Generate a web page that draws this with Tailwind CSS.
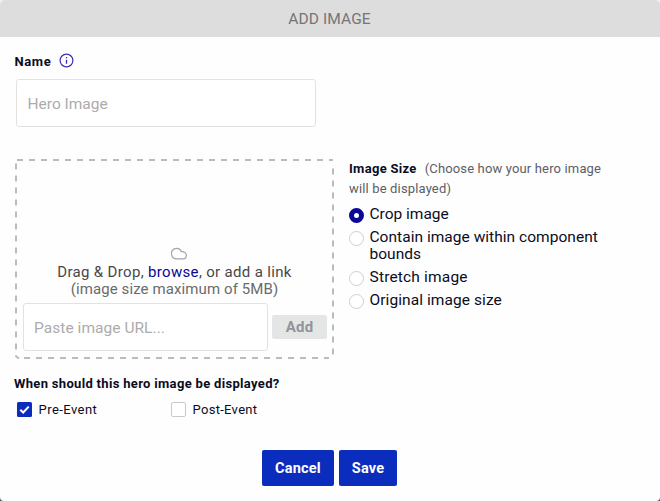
<!DOCTYPE html>
<html lang="en">
<head>
<meta charset="utf-8">
<title>Add Image</title>
<script src="https://cdn.jsdelivr.net/npm/@tailwindcss/browser@4"></script>
</head>
<body class="bg-linear-to-b from-[#f0f0f0] from-50% to-[#555555] to-50% font-[Roboto,'Liberation_Sans',sans-serif] text-[#0b0c1e]">
<main class="flex h-[501px] w-[660px] flex-col overflow-hidden rounded-t-[5px] rounded-b-[4px] bg-[#fefefe]">
  <header class="flex h-[37px] shrink-0 items-center justify-center bg-[#dddddd] pt-[2px] text-[15.5px] text-[#757575]"><span class="mr-px tracking-[0.1px]">ADD IMAGE</span></header>

  <section class="h-[122px] shrink-0 pl-[14px] pt-[14px]">
    <div class="flex h-5 items-center">
      <label for="name" class="w-[45px] pl-[0.5px] pt-[2px] text-[13px] font-bold tracking-[0.6px]">Name</label>
      <svg class="-mt-px h-[15px] w-[15px]" viewBox="0 0 15 15" fill="none" stroke="#3d2fb5"><circle cx="7.5" cy="7.5" r="6.4" stroke-width="1.2"/><path d="M7.5 6.7v4M7.5 4v1.2" stroke-width="1.3"/></svg>
    </div>
    <input id="name" placeholder="Hero Image" class="ml-0.5 mt-2 block h-12 w-[300px] rounded-[3px] border border-[#e2e2e2] bg-white px-[10.5px] pt-[2px] text-[15.5px] placeholder:text-[#acacac]">
  </section>

  <section class="flex h-[200px] shrink-0 pl-[15px]">
    <div class="relative flex w-[319px] flex-col items-center pt-[88px]">
      <svg class="absolute inset-0 h-[200px] w-[319px]" viewBox="0 0 319 200" fill="none" stroke="#bbbbbb" stroke-width="2" stroke-dasharray="6 6">
        <path d="M2 1H318M1 4.500V198M9 199H312M318 9.500V198"/>
        <path d="M0.500 197L4 199.500M312 199H314" stroke-dasharray="none"/>
      </svg>
      <svg class="ml-[9px] h-[13px] w-[17px]" viewBox="0 0 17 13" fill="none" stroke="#a5a5a5" stroke-width="1.2"><path d="M5.800 11.900A5.200 5.200 0 1 1 10.500 4.700C13.500 4.500 15.400 6.200 15.400 8.300C15.400 10.500 14 11.900 12 11.900Z"/></svg>
      <p class="mt-1 h-[17px] whitespace-nowrap text-[15px] leading-[17px] tracking-[0.33px] text-[#484848]">Drag &amp; Drop, <a class="text-[#0b0797]">browse</a>, or add a link</p>
      <p class="h-[17px] whitespace-nowrap text-[15px] leading-[17px] tracking-[0.1px] text-[#6b6b6b]">(image size maximum of 5MB)</p>
      <div class="mt-[5px] flex items-center gap-1">
        <input placeholder="Paste image URL..." class="h-12 w-[245px] rounded-[3px] border border-[#e2e2e2] bg-white px-[10.5px] pt-[2px] text-[15.5px] tracking-[0.05px] placeholder:text-[#acacac]">
        <button class="h-6 w-[55px] rounded-[2px] bg-[#e4e6e6] pl-px text-[15px] font-bold leading-6 tracking-[0.2px] text-[#929498]">Add</button>
      </div>
    </div>

    <div class="ml-[15px] w-[280px]">
      <p class="text-[13px] leading-5 tracking-[0.15px] text-[#5b5d66]"><b class="mr-2 tracking-[0.3px] text-[#0b0c1e]">Image Size</b>(Choose how your hero image<br>will be displayed)</p>
      <div class="mt-[7px] flex flex-col gap-[6px] text-[15.5px] leading-[17px]">
        <label class="flex gap-[5.5px]"><i class="mt-[2px] h-[15px] w-[15px] shrink-0 rounded-full border-[5px] border-[#0b0797] bg-white"></i><span>Crop image</span></label>
        <label class="flex gap-[5.5px]"><i class="mt-[2px] h-[15px] w-[15px] shrink-0 rounded-full border border-[#cfcfcf] bg-white"></i><span class="tracking-[0.03px]">Contain image within component<br>bounds</span></label>
        <label class="flex gap-[5.5px]"><i class="mt-[2px] h-[15px] w-[15px] shrink-0 rounded-full border border-[#cfcfcf] bg-white"></i><span class="tracking-[0.18px]">Stretch image</span></label>
        <label class="flex gap-[5.5px]"><i class="mt-[2px] h-[15px] w-[15px] shrink-0 rounded-full border border-[#cfcfcf] bg-white"></i><span class="tracking-[0.08px]">Original image size</span></label>
      </div>
    </div>
  </section>

  <section class="h-[91px] shrink-0 pl-[14px] pt-[15px] text-[13px] leading-5">
    <h2 class="font-bold tracking-[0.32px]">When should this hero image be displayed?</h2>
    <div class="mt-[6px] flex pl-[3px]">
      <label class="flex w-[154px] gap-[6.5px]"><svg class="mt-[2px] h-[15px] w-[15px]" viewBox="0 0 15 15"><rect width="15" height="15" rx="1.500" fill="#0a2dbd"/><path d="M3.300 7.800L6.200 10.500L11.700 4.600" fill="none" stroke="#fff" stroke-width="2"/></svg><span class="tracking-[0.45px]">Pre-Event</span></label>
      <label class="flex gap-[6.5px]"><i class="mt-[2px] h-[15px] w-[15px] rounded-[2px] border border-[#c9c9c9] bg-white"></i><span class="tracking-[0.3px]">Post-Event</span></label>
    </div>
  </section>

  <footer class="flex gap-[5px] pl-[262px] text-[14.5px] font-bold tracking-[0.2px] text-white">
    <button class="h-9 w-[72px] rounded-[2px] bg-[#0a2dbd] pt-[2px]">Cancel</button>
    <button class="h-9 w-[58px] rounded-[2px] bg-[#0a2dbd] pt-[2px]">Save</button>
  </footer>
</main>
</body>
</html>
